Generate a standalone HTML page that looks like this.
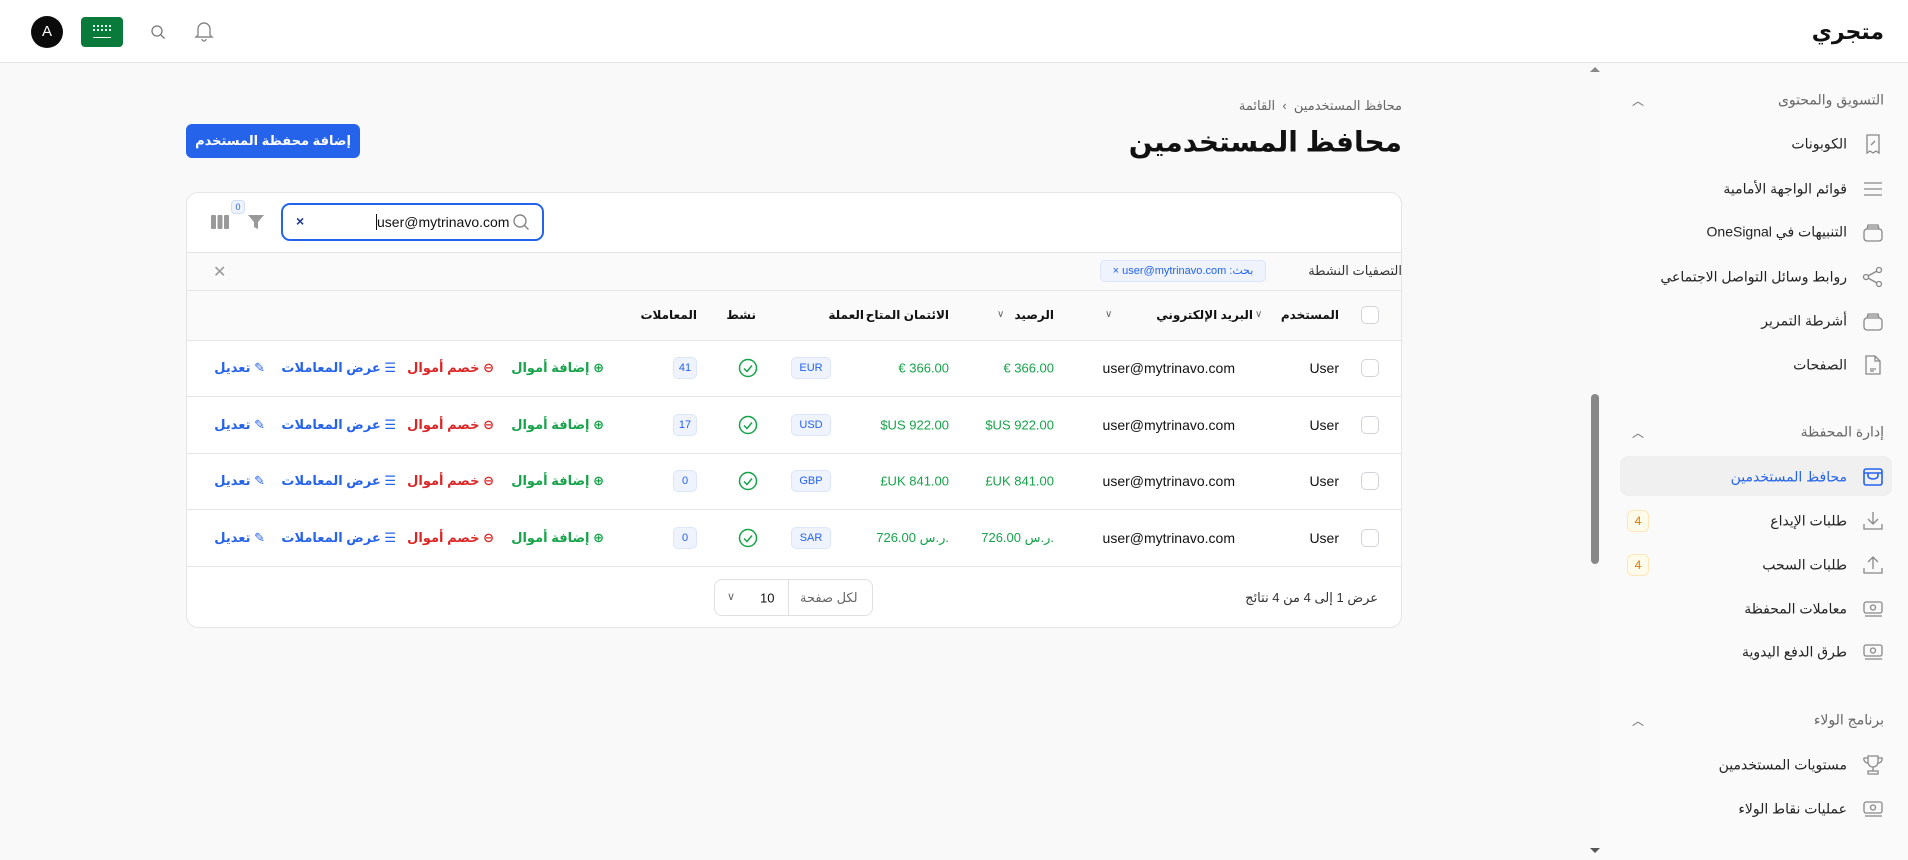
<!DOCTYPE html>
<html lang="ar"><head><meta charset="utf-8">
<style>
*{box-sizing:border-box;margin:0;padding:0}
body{width:1908px;height:860px;position:relative;overflow:hidden;background:#f9f9f9;font-family:"Liberation Sans","DejaVu Sans",sans-serif;color:#111;font-size:14px}
.a{position:absolute;white-space:nowrap}
.r{direction:rtl}
.side{position:absolute;left:1601px;top:64px;width:307px;height:796px;background:#fafafa}
.sbi{color:#222;font-size:14px}
.ico{position:absolute;width:22px;height:22px}
.muted{color:#666}
.badge{position:absolute;width:22px;height:22px;border:1px solid #fde7b8;background:#fffbeb;color:#d97706;border-radius:6px;font-size:12px;text-align:center;line-height:20px}
.green{color:#16a34a}.red{color:#dc2626}.blue{color:#2563eb}
.cb{position:absolute;width:18px;height:18px;border:1px solid #d4d4d8;border-radius:5px;background:#fff}
.pill{position:absolute;border:1px solid #dbe6fb;background:#eef3fe;color:#2563eb;border-radius:5px;font-size:11px;text-align:center}
.hline{position:absolute;left:186px;width:1216px;height:1px;background:#e5e5e5}
.th{font-weight:bold;font-size:12px}
</style></head><body>

<div class="a" style="left:0;top:0;width:1908px;height:63px;background:#fff;border-bottom:1px solid #e5e5e5"></div>
<div class="a r" style="right:24px;top:32px;font-size:22px;font-weight:bold;transform:translateY(-50%)">متجري</div>
<div class="a" style="left:31px;top:16px;width:32px;height:32px;border-radius:50%;background:#0b0b0b;color:#fff;text-align:center;line-height:32px;font-size:15px">A</div>
<div class="a" style="left:81px;top:17px;width:42px;height:30px;border-radius:4px;background:#0a7a3a">
<div class="a" style="left:12px;top:8px;width:18px;height:6px;border-top:2px dotted #dfe;border-bottom:2px dotted #dfe"></div>
<div class="a" style="left:12px;top:20px;width:18px;height:1px;background:#fff"></div></div>
<svg class="a" style="left:150px;top:24px" width="16" height="16" viewBox="0 0 16 16" fill="none" stroke="#777" stroke-width="1.3"><circle cx="7" cy="7" r="5"/><path d="M11 11l3.5 3.5"/></svg>
<svg class="a" style="left:194px;top:20px" width="20" height="22" viewBox="0 0 20 22" fill="none" stroke="#888" stroke-width="1.4"><path d="M4 15V9a6 6 0 0112 0v6l2 2H2z"/><path d="M8 19a2 2 0 004 0"/></svg>

<div class="a" style="left:1586px;top:64px;width:15px;height:796px;background:#f9f9f9"></div>
<div class="a" style="left:1590px;top:67px;border-left:5px solid transparent;border-right:5px solid transparent;border-bottom:5px solid #888"></div>
<div class="a" style="left:1591px;top:394px;width:8px;height:170px;border-radius:4px;background:#888"></div>
<div class="a" style="left:1590px;top:848px;border-left:5px solid transparent;border-right:5px solid transparent;border-top:5px solid #555"></div>

<div class="side"></div>
<div class="a r muted" style="right:24px;top:100px;font-size:14px;transform:translateY(-50%)">التسويق والمحتوى</div>
<div class="a muted" style="left:1632px;top:92px;font-size:12px">︿</div>

<div class="a r sbi" style="right:61px;top:144px;transform:translateY(-50%)">الكوبونات</div>
<svg class="ico" style="left:1862px;top:133px" viewBox="0 0 22 22" fill="none" stroke="#888" stroke-width="1.3"><path d="M5 2h12v18l-3-2-3 2-3-2-3 2z"/><path d="M9 12l4-4" /></svg>
<div class="a r sbi" style="right:61px;top:189px;transform:translateY(-50%)">قوائم الواجهة الأمامية</div>
<svg class="ico" style="left:1862px;top:178px" viewBox="0 0 22 22" fill="none" stroke="#888" stroke-width="1.3"><path d="M2 5h18M2 11h18M2 17h18"/></svg>
<div class="a r sbi" style="right:61px;top:232px;transform:translateY(-50%)">التنبيهات في OneSignal</div>
<svg class="ico" style="left:1862px;top:221px" viewBox="0 0 22 22" fill="none" stroke="#888" stroke-width="1.3"><rect x="2" y="8" width="18" height="12" rx="3"/><path d="M5 8l1-4h10l1 4M5 6h12"/></svg>
<div class="a r sbi" style="right:61px;top:277px;transform:translateY(-50%)">روابط وسائل التواصل الاجتماعي</div>
<svg class="ico" style="left:1862px;top:266px" viewBox="0 0 22 22" fill="none" stroke="#888" stroke-width="1.3"><circle cx="17" cy="4" r="2.5"/><circle cx="4" cy="11" r="2.5"/><circle cx="17" cy="18" r="2.5"/><path d="M6 10l9-5M6 12l9 5"/></svg>
<div class="a r sbi" style="right:61px;top:321px;transform:translateY(-50%)">أشرطة التمرير</div>
<svg class="ico" style="left:1862px;top:310px" viewBox="0 0 22 22" fill="none" stroke="#888" stroke-width="1.3"><rect x="2" y="8" width="18" height="12" rx="3"/><path d="M5 8l1-4h10l1 4M5 6h12"/></svg>
<div class="a r sbi" style="right:61px;top:365px;transform:translateY(-50%)">الصفحات</div>
<svg class="ico" style="left:1862px;top:354px" viewBox="0 0 22 22" fill="none" stroke="#888" stroke-width="1.3"><path d="M4 2h9l5 5v13H4z"/><path d="M13 2v5h5M8 15h6M8 17h4"/></svg>

<div class="a r muted" style="right:24px;top:432px;transform:translateY(-50%)">إدارة المحفظة</div>
<div class="a muted" style="left:1632px;top:424px;font-size:12px">︿</div>
<div class="a" style="left:1620px;top:456px;width:272px;height:40px;border-radius:8px;background:#f0f0f0"></div>
<div class="a r blue" style="right:61px;top:477px;transform:translateY(-50%)">محافظ المستخدمين</div>
<svg class="ico" style="left:1862px;top:466px" viewBox="0 0 22 22" fill="none" stroke="#2563eb" stroke-width="1.6"><rect x="2" y="3" width="18" height="16" rx="2"/><path d="M2 7h18M6 7v3a5 3 0 0010 0V7"/></svg>
<div class="a r sbi" style="right:61px;top:521px;transform:translateY(-50%)">طلبات الإيداع</div>
<svg class="ico" style="left:1862px;top:510px" viewBox="0 0 22 22" fill="none" stroke="#888" stroke-width="1.3"><path d="M11 2v12M6 9l5 5 5-5M2 14v5h18v-5"/></svg>
<div class="badge" style="left:1627px;top:510px">4</div>
<div class="a r sbi" style="right:61px;top:565px;transform:translateY(-50%)">طلبات السحب</div>
<svg class="ico" style="left:1862px;top:554px" viewBox="0 0 22 22" fill="none" stroke="#888" stroke-width="1.3"><path d="M11 15V3M6 8l5-5 5 5M2 14v5h18v-5"/></svg>
<div class="badge" style="left:1627px;top:554px">4</div>
<div class="a r sbi" style="right:61px;top:609px;transform:translateY(-50%)">معاملات المحفظة</div>
<svg class="ico" style="left:1862px;top:598px" viewBox="0 0 22 22" fill="none" stroke="#888" stroke-width="1.3"><rect x="2" y="4" width="18" height="11" rx="2"/><circle cx="11" cy="9.5" r="2.5"/><path d="M3 18h17"/></svg>
<div class="a r sbi" style="right:61px;top:652px;transform:translateY(-50%)">طرق الدفع اليدوية</div>
<svg class="ico" style="left:1862px;top:641px" viewBox="0 0 22 22" fill="none" stroke="#888" stroke-width="1.3"><rect x="2" y="4" width="18" height="11" rx="2"/><circle cx="11" cy="9.5" r="2.5"/><path d="M3 18h17"/></svg>

<div class="a r muted" style="right:24px;top:720px;transform:translateY(-50%)">برنامج الولاء</div>
<div class="a muted" style="left:1632px;top:712px;font-size:12px">︿</div>
<div class="a r sbi" style="right:61px;top:765px;transform:translateY(-50%)">مستويات المستخدمين</div>
<svg class="ico" style="left:1862px;top:754px" viewBox="0 0 22 22" fill="none" stroke="#888" stroke-width="1.3"><path d="M6 2h10v6a5 5 0 01-10 0zM6 4H2a4 4 0 004 5M16 4h4a4 4 0 01-4 5M11 13v4M6 20h10v-3H6z"/></svg>
<div class="a r sbi" style="right:61px;top:809px;transform:translateY(-50%)">عمليات نقاط الولاء</div>
<svg class="ico" style="left:1862px;top:798px" viewBox="0 0 22 22" fill="none" stroke="#888" stroke-width="1.3"><rect x="2" y="4" width="18" height="11" rx="2"/><circle cx="11" cy="9.5" r="2.5"/><path d="M3 18h17"/></svg>

<div class="a r muted" style="right:506px;top:106px;transform:translateY(-50%);font-size:13px">محافظ المستخدمين &nbsp;›&nbsp; القائمة</div>
<div class="a r" style="right:506px;top:142px;transform:translateY(-50%);font-size:28px;font-weight:bold">محافظ المستخدمين</div>
<div class="a r" style="left:186px;top:124px;width:174px;height:34px;background:#2563eb;border-radius:6px;color:#fff;font-weight:bold;font-size:13px;text-align:center;line-height:34px">إضافة محفظة المستخدم</div>

<div class="a" style="left:186px;top:192px;width:1216px;height:436px;background:#fff;border:1px solid #e5e5e5;border-radius:12px"></div>
<div class="a" style="left:281px;top:203px;width:263px;height:38px;border:2px solid #2563eb;border-radius:9px;background:#fff"></div>
<div class="a" style="left:376px;top:222px;transform:translateY(-50%);font-size:14px"><span style="border-left:1px solid #111">user@mytrinavo.com</span></div>
<svg class="a" style="left:512px;top:213px" width="18" height="18" viewBox="0 0 18 18" fill="none" stroke="#888" stroke-width="1.4"><circle cx="8" cy="8" r="6"/><path d="M12.5 12.5l4 4"/></svg>
<div class="a" style="left:296px;top:213px;font-weight:bold;color:#1e3a8a;font-size:14px">×</div>
<svg class="a" style="left:247px;top:213px" width="18" height="18" viewBox="0 0 18 18" fill="#999"><path d="M1 2h16l-6 7v7l-4-2V9z"/></svg>
<div class="a" style="left:231px;top:200px;width:14px;height:14px;border:1px solid #cfdcf8;background:#eef3fe;border-radius:4px;color:#2563eb;font-size:9px;text-align:center;line-height:12px">0</div>
<svg class="a" style="left:211px;top:215px" width="18" height="14" viewBox="0 0 18 14" fill="#999"><rect x="0" y="0" width="5" height="14" rx="1"/><rect x="6.5" y="0" width="5" height="14" rx="1"/><rect x="13" y="0" width="5" height="14" rx="1"/></svg>

<div class="hline" style="top:252px"></div>
<div class="a" style="left:187px;top:253px;width:1214px;height:37px;background:#fafafa"></div>
<div class="a r" style="right:506px;top:271px;transform:translateY(-50%);color:#333;font-size:13px">التصفيات النشطة</div>
<div class="a" style="left:1100px;top:260px;width:166px;height:22px;background:#eef3fe;border:1px solid #dbe6fb;border-radius:5px;color:#2563eb;font-size:11px;line-height:20px;text-align:center">× user@mytrinavo.com <span style="direction:rtl">:بحث</span></div>
<div class="a" style="left:213px;top:262px;color:#999;font-size:16px">✕</div>
<div class="hline" style="top:290px"></div>
<div class="a" style="left:187px;top:291px;width:1214px;height:49px;background:#fafafa"></div>

<div class="cb" style="left:1361px;top:306px"></div>
<div class="a r th" style="right:569px;top:315px;transform:translateY(-50%)">المستخدم</div>
<div class="a muted" style="left:1255px;top:309px;font-size:10px">∨</div>
<div class="a r th" style="right:655px;top:315px;transform:translateY(-50%)">البريد الإلكتروني</div>
<div class="a muted" style="left:1105px;top:309px;font-size:10px">∨</div>
<div class="a r th" style="right:854px;top:315px;transform:translateY(-50%)">الرصيد</div>
<div class="a muted" style="left:997px;top:309px;font-size:10px">∨</div>
<div class="a r th" style="right:959px;top:315px;transform:translateY(-50%)">الائتمان المتاح</div>
<div class="a r th" style="right:1044px;top:315px;transform:translateY(-50%)">العملة</div>
<div class="a r th" style="right:1152px;top:315px;transform:translateY(-50%)">نشط</div>
<div class="a r th" style="right:1211px;top:315px;transform:translateY(-50%)">المعاملات</div>
<div class="hline" style="top:340px"></div>

<div id="rows"></div>
<script>
var rows=[["€ 366.00","EUR","41"],["$US 922.00","USD","17"],["£UK 841.00","GBP","0"],["726.00 ر.س.","SAR","0"]];
var tops=[368,425,481,538],h="";
rows.forEach(function(r,i){var y=tops[i];
h+='<div class="cb" style="left:1361px;top:'+(y-9)+'px"></div>';
h+='<div class="a" style="right:569px;top:'+y+'px;transform:translateY(-50%)">User</div>';
h+='<div class="a" style="right:673px;top:'+y+'px;transform:translateY(-50%)">user@mytrinavo.com</div>';
h+='<div class="a green" style="right:854px;top:'+y+'px;transform:translateY(-50%);font-size:13px">'+r[0]+'</div>';
h+='<div class="a green" style="right:959px;top:'+y+'px;transform:translateY(-50%);font-size:13px">'+r[0]+'</div>';
h+='<div class="pill" style="left:791px;top:'+(y-11)+'px;width:40px;height:22px;line-height:20px">'+r[1]+'</div>';
h+='<svg class="a" style="left:738px;top:'+(y-10)+'px" width="20" height="20" viewBox="0 0 20 20" fill="none" stroke="#16a34a" stroke-width="1.5"><circle cx="10" cy="10" r="8.5"/><path d="M6 10.5l3 3 5-6"/></svg>';
h+='<div class="pill" style="left:673px;top:'+(y-11)+'px;width:24px;height:22px;line-height:20px">'+r[2]+'</div>';
h+='<div class="a r green" style="right:1304px;top:'+y+'px;transform:translateY(-50%);font-weight:bold;font-size:13px">⊕ إضافة أموال</div>';
h+='<div class="a r red" style="right:1414px;top:'+y+'px;transform:translateY(-50%);font-weight:bold;font-size:13px">⊖ خصم أموال</div>';
h+='<div class="a r blue" style="right:1512px;top:'+y+'px;transform:translateY(-50%);font-weight:bold;font-size:13px">☰ عرض المعاملات</div>';
h+='<div class="a r blue" style="right:1643px;top:'+y+'px;transform:translateY(-50%);font-weight:bold;font-size:13px">✎ تعديل</div>';
h+='<div class="hline" style="top:'+(y+28)+'px"></div>';
});
document.getElementById('rows').innerHTML=h;
</script>

<div class="a r" style="right:530px;top:598px;transform:translateY(-50%);font-size:13px;color:#333">عرض 1 إلى 4 من 4 نتائج</div>
<div class="a" style="left:714px;top:579px;width:159px;height:37px;border:1px solid #e0e0e0;border-radius:8px;background:#fff"></div>
<div class="a" style="left:788px;top:580px;width:1px;height:35px;background:#e0e0e0"></div>
<div class="a r muted" style="left:800px;top:598px;transform:translateY(-50%);font-size:13px">لكل صفحة</div>
<div class="a" style="left:760px;top:598px;transform:translateY(-50%);font-size:13px">10</div>
<div class="a muted" style="left:727px;top:590px;font-size:11px">∨</div>
</body></html>
